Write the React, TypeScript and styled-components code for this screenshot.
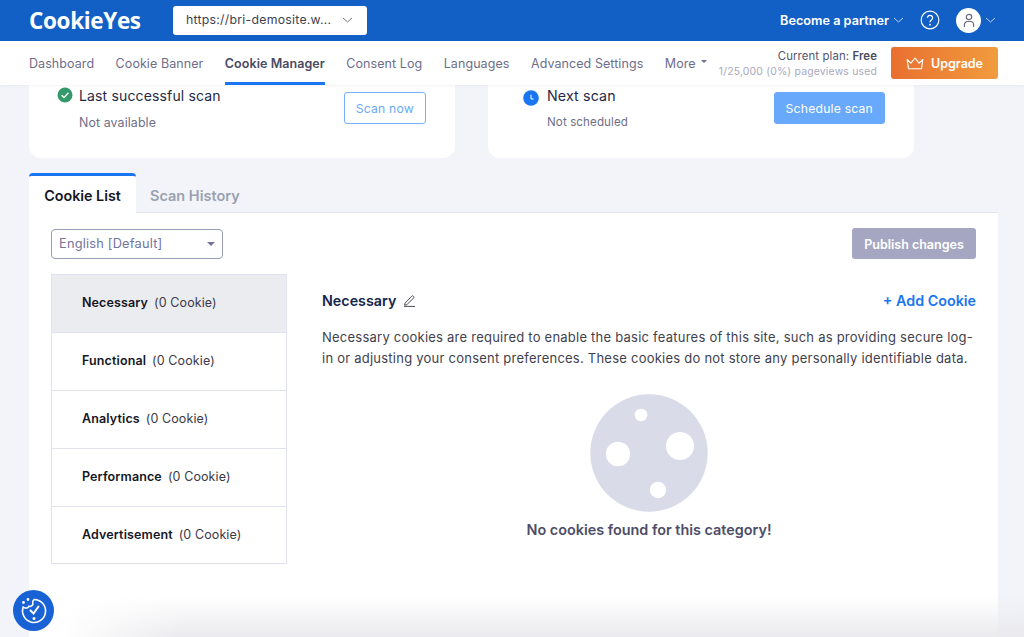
import React from "react";
import styled, { createGlobalStyle } from "styled-components";

const Global = createGlobalStyle`
  html, body { margin: 0; padding: 0; background: #f3f4fa; }
  body { font-family: Inter, "Liberation Sans", sans-serif; -webkit-font-smoothing: antialiased; }
  * { box-sizing: border-box; }
`;

const Page = styled.div`
  position: relative;
  width: 1024px;
  height: 637px;
  overflow: hidden;
  background: #f3f4fa;
  white-space: nowrap;
`;

const TopBar = styled.header`
  height: 41px;
  background: #1260c5;
  display: flex;
  align-items: center;
  padding: 0 28px 0 29px;
`;

const Logo = styled.div`
  width: 144px;
  font-family: "Open Sans", "Liberation Sans", sans-serif;
  font-weight: 700;
  font-size: 22.5px;
  letter-spacing: -0.35px;
  color: #fff;
  line-height: 41px;
`;

const SiteSelect = styled.div`
  width: 194px;
  height: 29px;
  margin-bottom: 1px;
  background: #fff;
  border-radius: 3px;
  display: flex;
  align-items: center;
  justify-content: space-between;
  padding: 0 14px 1px 13px;
  font-size: 12.3px;
  letter-spacing: 0.25px;
  color: #3f3f4d;
`;

const TopRight = styled.div`
  margin-left: auto;
  display: flex;
  align-items: center;
  padding-bottom: 1px;
`;

const Partner = styled.div`
  font-size: 12.7px;
  font-weight: 600;
  color: #fff;
  margin-right: 4px;
`;

const HelpIcon = styled.svg`
  margin-left: 16px;
  display: block;
`;

const Avatar = styled.div`
  width: 25px;
  height: 25px;
  border-radius: 50%;
  background: #fff;
  margin-left: 16px;
  display: flex;
  align-items: center;
  justify-content: center;
`;

const NavBar = styled.nav`
  height: 44px;
  background: #fff;
  display: flex;
  align-items: stretch;
  padding-left: 29px;
  position: relative;
  z-index: 2;
  box-shadow: 0 1px 3px rgba(40, 50, 90, 0.06);
`;

const NavItem = styled.div<{ $active?: boolean }>`
  display: flex;
  align-items: center;
  gap: 5px;
  margin-right: 21.5px;
  font-size: 12.5px;
  letter-spacing: 0.07px;
  padding-top: 3px;
  color: ${(p) => (p.$active ? "#4a4a62" : "#6e6e8a")};
  font-weight: ${(p) => (p.$active ? 600 : 400)};
  border-bottom: 3px solid ${(p) => (p.$active ? "#1a76f0" : "transparent")};
  &:nth-child(7) { margin-right: 0; }
`;

const Caret = styled.span`
  width: 0;
  height: 0;
  border-left: 3px solid transparent;
  border-right: 3px solid transparent;
  border-top: 3px solid #6e6e8a;
  margin-bottom: 3px;
`;

const PlanBox = styled.div`
  margin-left: auto;
  text-align: right;
  padding-top: 8px;
  margin-right: 14px;
`;

const PlanLine = styled.div`
  font-size: 11.4px;
  line-height: 14px;
  letter-spacing: 0.1px;
  color: #55556a;
  b { font-weight: 600; color: #4a4a5c; }
`;

const UsageLine = styled.div`
  font-size: 10.4px;
  line-height: 14px;
  letter-spacing: 0.2px;
  color: #a9a9bd;
  margin-top: 2px;
`;

const UpgradeButton = styled.div`
  flex: none;
  align-self: flex-start;
  margin: 6px 26px 0 0;
  width: 107px;
  height: 32px;
  border-radius: 3px;
  background: linear-gradient(90deg, #e96f2f, #f09c3e);
  color: #fff;
  display: flex;
  align-items: center;
  justify-content: center;
  gap: 7px;
  font-size: 12.5px;
  font-weight: 600;
`;

const ScanCards = styled.section`
  display: flex;
  gap: 33px;
  padding-left: 29px;
`;

const ScanCard = styled.div`
  width: 426px;
  height: 73px;
  background: #fff;
  border-radius: 0 0 12px 12px;
  display: flex;
  justify-content: space-between;
  padding: 0 29px 0 28px;
`;

const ScanInfo = styled.div`
  display: flex;
  flex-direction: column;
`;

const ScanTitleRow = styled.div<{ $indent?: number; $gap?: number }>`
  display: flex;
  align-items: center;
  gap: ${(p) => p.$gap ?? 6}px;
  height: 20px;
  padding-left: ${(p) => p.$indent ?? 0}px;
`;

const ScanTitle = styled.div<{ $size?: number }>`
  font-size: ${(p) => p.$size ?? 14}px;
  letter-spacing: 0.15px;
  color: #1f2a44;
`;

const ClockIcon = styled.svg`
  margin-top: 6px;
`;

const ScanSub = styled.div<{ $indent: number; $size: number }>`
  font-size: ${(p) => p.$size}px;
  letter-spacing: 0.1px;
  color: #6f6f88;
  margin: 10px 0 0 ${(p) => p.$indent}px;
`;

const ScanButton = styled.div<{ $filled?: boolean }>`
  margin-top: 7px;
  height: 32px;
  border-radius: 3px;
  border: 1px solid ${(p) => (p.$filled ? "#69a9fb" : "#77b0fb")};
  background: ${(p) => (p.$filled ? "#69a9fb" : "#fff")};
  color: ${(p) => (p.$filled ? "#fff" : "#69a9fb")};
  display: flex;
  align-items: center;
  justify-content: center;
  font-size: 12.2px;
  letter-spacing: 0.2px;
  padding: 0 11px;
`;

const Tabs = styled.div`
  display: flex;
  margin: 15px 26px 0 29px;
  height: 40px;
  border-bottom: 1px solid #e3e5f0;
`;

const Tab = styled.div<{ $active?: boolean }>`
  width: ${(p) => (p.$active ? "107px" : "auto")};
  height: 41px;
  padding-left: ${(p) => (p.$active ? "0" : "14px")};
  display: flex;
  align-items: center;
  justify-content: center;
  font-size: ${(p) => (p.$active ? "14.3px" : "14.5px")};
  font-weight: 600;
  color: ${(p) => (p.$active ? "#16161f" : "#9aa1ae")};
  background: ${(p) => (p.$active ? "#fff" : "transparent")};
  border-top: 3px solid ${(p) => (p.$active ? "#1a76f0" : "transparent")};
  border-radius: 4px 4px 0 0;
`;

const Panel = styled.section`
  margin: 0 26px 0 29px;
  height: 430px;
  background: #fff;
  padding: 15px 22px 0 22px;
`;

const PanelToolbar = styled.div`
  display: flex;
  justify-content: space-between;
  align-items: center;
  height: 31px;
`;

const LanguageSelect = styled.div`
  width: 172px;
  height: 30px;
  border: 1px solid #9a9cbb;
  border-radius: 4px;
  display: flex;
  align-items: center;
  justify-content: space-between;
  padding: 0 7px 0 7px;
  font-size: 12.8px;
  letter-spacing: 0.2px;
  color: #72749a;
`;

const SelectCaret = styled.span`
  width: 0;
  height: 0;
  border-left: 4px solid transparent;
  border-right: 4px solid transparent;
  border-top: 4px solid #72749a;
`;

const PublishButton = styled.div`
  width: 124px;
  height: 31px;
  border-radius: 3px;
  background: #a5a7c2;
  color: #fff;
  display: flex;
  align-items: center;
  justify-content: center;
  padding-top: 1px;
  font-size: 12.5px;
  font-weight: 600;
`;

const Columns = styled.div`
  display: flex;
  margin-top: 15px;
`;

const CategoryList = styled.div`
  width: 236px;
  flex: none;
  border: 1px solid #e1e2ef;
  border-bottom: none;
`;

const CategoryRow = styled.div<{ $active?: boolean }>`
  height: 58px;
  display: flex;
  align-items: center;
  padding: 0 0 2px 30px;
  gap: 6px;
  border-bottom: 1px solid #e1e2ef;
  background: ${(p) => (p.$active ? "#ebecef" : "#fff")};
  font-size: 12.5px;
  color: #3a3a46;
  letter-spacing: 0.1px;
  b { font-weight: 600; color: #16161f; letter-spacing: 0.12px; }
  &:last-child { height: 57px; padding-bottom: 1px; }
`;

const Detail = styled.div`
  flex: 1;
  padding: 16px 0 0 35px;
`;

const DetailHead = styled.div`
  display: flex;
  align-items: center;
  justify-content: space-between;
  height: 20px;
`;

const DetailTitle = styled.div`
  display: flex;
  align-items: center;
  gap: 7px;
  font-size: 14.3px;
  font-weight: 600;
  color: #15264d;
`;

const AddCookie = styled.div`
  font-size: 14.3px;
  font-weight: 600;
  color: #1a76f0;
`;

const Description = styled.p`
  margin: 17px 0 0;
  font-size: 13px;
  line-height: 21px;
  letter-spacing: 0.235px;
  color: #3f3f4d;
  white-space: normal;
`;

const Empty = styled.div`
  display: flex;
  flex-direction: column;
  align-items: center;
  margin-top: 25px;
`;

const EmptyText = styled.div`
  margin-top: 9px;
  font-size: 14.4px;
  font-weight: 600;
  color: #4d4d68;
`;

const BottomFade = styled.div`
  position: absolute;
  left: 60px;
  right: 0;
  bottom: 0;
  height: 40px;
  background: linear-gradient(180deg, rgba(235, 235, 240, 0), rgba(232, 232, 236, 0.9));
  -webkit-mask-image: linear-gradient(90deg, transparent, #000 120px);
  mask-image: linear-gradient(90deg, transparent, #000 120px);
  pointer-events: none;
`;

const ConsentBadge = styled.div`
  position: absolute;
  left: 13px;
  bottom: 6px;
  width: 41px;
  height: 41px;
  border-radius: 50%;
  background: #1862d6;
  display: flex;
  align-items: center;
  justify-content: center;
`;

const Spacer = styled.span`
  width: 4px;
`;

const ChevronSvg = styled.svg`
  display: block;
  flex: none;
`;

const Chevron = ({ color }: { color: string }) => (
  <ChevronSvg width="11" height="6" viewBox="0 0 11 6">
    <path d="M1 1l4.5 4L10 1" fill="none" stroke={color} strokeWidth="0.9" />
  </ChevronSvg>
);

const categories = [
  ["Necessary", true],
  ["Functional", false],
  ["Analytics", false],
  ["Performance", false],
  ["Advertisement", false],
] as const;

const navItems = ["Dashboard", "Cookie Banner", "Cookie Manager", "Consent Log", "Languages", "Advanced Settings"];

export default function App() {
  return (
    <Page>
      <Global />
      <TopBar>
        <Logo>CookieYes</Logo>
        <SiteSelect>
          <span>https://bri-demosite.w...</span>
          <Chevron color="#6b6b78" />
        </SiteSelect>
        <TopRight>
          <Partner>Become a partner</Partner>
          <Chevron color="#cfe0f7" />
          <HelpIcon width="20" height="20" viewBox="0 0 21 21">
            <circle cx="10.5" cy="10.5" r="9.3" fill="none" stroke="#fff" strokeWidth="1.2" />
            <path d="M7.8 8.2a2.7 2.7 0 1 1 4.2 2.3c-1 .7-1.5 1.2-1.5 2.4" fill="none" stroke="#fff" strokeWidth="1.3" />
            <circle cx="10.5" cy="15.4" r="0.9" fill="#fff" />
          </HelpIcon>
          <Avatar>
            <svg width="14" height="15" viewBox="0 0 14 15">
              <circle cx="7" cy="4" r="2.7" fill="none" stroke="#6b6b80" strokeWidth="1.2" />
              <path d="M2.4 14v-2.2A3.3 3.3 0 0 1 5.7 8.5h2.6a3.3 3.3 0 0 1 3.3 3.3V14" fill="none" stroke="#6b6b80" strokeWidth="1.2" />
            </svg>
          </Avatar>
          <Spacer />
          <Chevron color="#cfe0f7" />
        </TopRight>
      </TopBar>

      <NavBar>
        {navItems.map((n) => (
          <NavItem key={n} $active={n === "Cookie Manager"}>{n}</NavItem>
        ))}
        <NavItem>More<Caret /></NavItem>
        <PlanBox>
          <PlanLine>Current plan: <b>Free</b></PlanLine>
          <UsageLine>1/25,000 (0%) pageviews used</UsageLine>
        </PlanBox>
        <UpgradeButton>
          <svg width="18" height="13" viewBox="0 0 18 13">
            <path d="M1.2 2.5l3.7 3.7L9 1l4.1 5.2 3.7-3.7-1.3 9.3H2.5z" fill="none" stroke="#fff" strokeWidth="1.1" strokeLinejoin="round" />
          </svg>
          Upgrade
        </UpgradeButton>
      </NavBar>

      <ScanCards>
        <ScanCard>
          <ScanInfo>
            <ScanTitleRow>
              <svg width="16" height="16" viewBox="0 0 16 16">
                <circle cx="8" cy="8" r="7.5" fill="#34996b" />
                <path d="M4.6 8.2l2.4 2.4 4.4-4.8" fill="none" stroke="#fff" strokeWidth="1.4" />
              </svg>
              <ScanTitle>Last successful scan</ScanTitle>
            </ScanTitleRow>
            <ScanSub $indent={22} $size={12.4}>Not available</ScanSub>
          </ScanInfo>
          <ScanButton>Scan now</ScanButton>
        </ScanCard>
        <ScanCard>
          <ScanInfo>
            <ScanTitleRow $indent={7} $gap={8}>
              <ClockIcon width="16" height="16" viewBox="0 0 16 16">
                <circle cx="8" cy="8" r="7.8" fill="#1a76f0" />
                <path d="M8 4.8V9h2.6" fill="none" stroke="#fff" strokeWidth="1" />
              </ClockIcon>
              <ScanTitle $size={14.2}>Next scan</ScanTitle>
            </ScanTitleRow>
            <ScanSub $indent={31} $size={11.6}>Not scheduled</ScanSub>
          </ScanInfo>
          <ScanButton $filled>Schedule scan</ScanButton>
        </ScanCard>
      </ScanCards>

      <Tabs>
        <Tab $active>Cookie List</Tab>
        <Tab>Scan History</Tab>
      </Tabs>

      <Panel>
        <PanelToolbar>
          <LanguageSelect>
            <span>English [Default]</span>
            <SelectCaret />
          </LanguageSelect>
          <PublishButton>Publish changes</PublishButton>
        </PanelToolbar>
        <Columns>
          <CategoryList>
            {categories.map(([name, active]) => (
              <CategoryRow key={name} $active={active}>
                <b>{name}</b> (0 Cookie)
              </CategoryRow>
            ))}
          </CategoryList>
          <Detail>
            <DetailHead>
              <DetailTitle>
                Necessary
                <svg width="13" height="13" viewBox="0 0 13 13">
                  <path d="M2 9.2L8.8 2.2a1 1 0 0 1 1.5 0l.3.3a1 1 0 0 1 0 1.5L3.8 10.8 1.6 11.2zM1 12.4h11" fill="none" stroke="#3a3a46" strokeWidth="0.9" />
                </svg>
              </DetailTitle>
              <AddCookie>+ Add Cookie</AddCookie>
            </DetailHead>
            <Description>
              Necessary cookies are required to enable the basic features of this site, such as providing secure log-in or adjusting your consent preferences. These cookies do not store any personally identifiable data.
            </Description>
            <Empty>
              <svg width="118" height="118" viewBox="0 0 118 118">
                <circle cx="59" cy="59" r="58.7" fill="#d9dbe9" />
                <circle cx="51" cy="21" r="6.3" fill="#fff" />
                <circle cx="90" cy="52" r="14" fill="#fff" />
                <circle cx="28" cy="60" r="12.2" fill="#fff" />
                <circle cx="68" cy="96" r="8.2" fill="#fff" />
              </svg>
              <EmptyText>No cookies found for this category!</EmptyText>
            </Empty>
          </Detail>
        </Columns>
      </Panel>

      <BottomFade />
      <ConsentBadge>
        <svg width="28" height="28" viewBox="0 0 28 28" fill="none" stroke="#fff" strokeWidth="1.6" strokeLinecap="round">
          <path d="M14 2.5a11.5 11.5 0 1 1-10.8 7.6c2.4 1.6 4.6 1.2 5.6-.8 2.2.4 4.6-1 4-3.6-.2-1.2.2-2.4 1.2-3.2z" />
          <path d="M10.5 13.5l3 3 5-7" strokeWidth="2" />
          <circle cx="14" cy="21.5" r="0.7" fill="#fff" />
          <circle cx="3.5" cy="5.5" r="0.6" fill="#fff" />
          <circle cx="8" cy="2.5" r="0.6" fill="#fff" />
        </svg>
      </ConsentBadge>
    </Page>
  );
}
